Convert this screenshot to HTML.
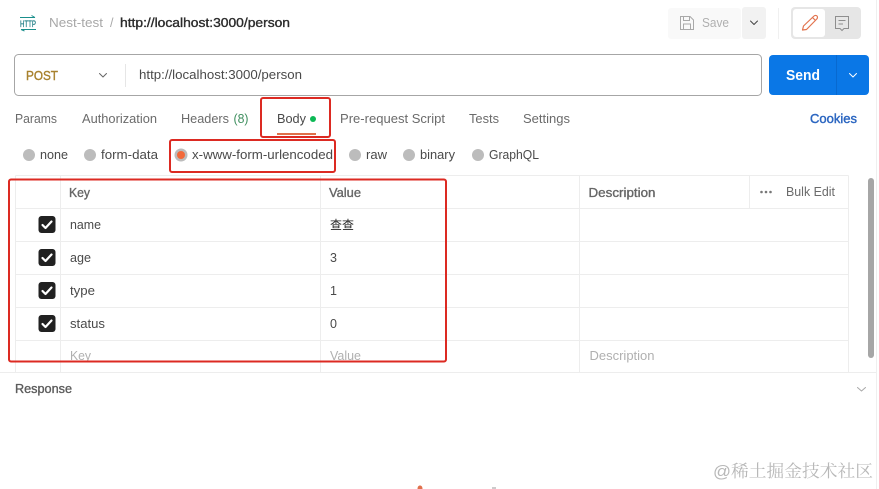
<!DOCTYPE html>
<html><head><meta charset="utf-8"><style>
html,body{margin:0;padding:0;background:#fff;width:879px;height:489px;overflow:hidden}
svg{display:block;filter:blur(.25px)}
text{font-family:"Liberation Sans","Noto Sans CJK SC",sans-serif;font-size:12.5px;fill:#6b6b6b}
.d{fill:#4a4a4a}
.s{fill:#666;stroke:#666;stroke-width:.35px;font-size:12.5px}
.p{fill:#b0b0b0}
.l{stroke:#ededed;stroke-width:1;fill:none}
.r{fill:none;stroke:#dc2a22;stroke-width:2}
.c{fill:none;stroke-width:1;stroke-linecap:round;stroke-linejoin:round}
</style></head><body>
<svg width="879" height="489" viewBox="0 0 879 489" xmlns="http://www.w3.org/2000/svg">
<rect width="879" height="489" fill="#fff"/>
<path d="M876.500 0V489" stroke="#efefef"/>

<!-- http icon -->
<g fill="none" stroke="#1a8f8c" stroke-width="1">
<path d="M20 17.500H35M31.500 15.500L35 17.500"/><path d="M21 29.500H36M21 29.500L24.500 31"/>
</g>
<text x="20" y="27" textLength="16" lengthAdjust="spacingAndGlyphs" style="font-size:9px;fill:#1d7d85;stroke:#1d7d85;stroke-width:.25px">HTTP</text>
<text x="49" y="27" textLength="54" lengthAdjust="spacingAndGlyphs" style="fill:#a8a8a8">Nest-test</text>
<text x="110" y="27" style="fill:#a8a8a8">/</text>
<text x="120" y="27" textLength="170" lengthAdjust="spacingAndGlyphs" style="fill:#2b2b2b;stroke:#2b2b2b;stroke-width:.35px;font-size:12.5px">http://localhost:3000/person</text>

<!-- save -->
<rect x="668" y="8" width="73" height="31" rx="3" fill="#f9f9f9"/>
<path d="M680.500 16.500H690L693.500 20V29.500H680.500Z M683.500 16.500V20.500H689.500V16.500 M683.500 29.500V24H690.500V29.500" fill="none" stroke="#a9a9a9" stroke-width="1"/>
<text x="702" y="27" textLength="27" lengthAdjust="spacingAndGlyphs" class="p" style="font-size:13px">Save</text>
<rect x="742" y="7" width="24" height="32" rx="3" fill="#f2f2f2"/>
<path class="c" stroke="#444" d="M750.500 21L754 24.500L757.500 21"/>
<path d="M778.500 8V39" stroke="#f0f0f0"/>
<rect x="791" y="7" width="70" height="32" rx="4" fill="#e6e6e6"/>
<rect x="793" y="9" width="32" height="28" rx="3" fill="#fff"/>
<path d="M803.500 26L814 16C815 15 816.500 15.500 817 16C817.500 16.500 817.800 18 816.800 19L806.500 29.500L802.500 30Z M812.500 17.500L815.500 20.500" fill="none" stroke="#e2734e" stroke-width="1.200" stroke-linejoin="round"/>
<path d="M835.500 16.500H848.500V28.500H844L842 30.500L840 28.500H835.500Z M838.500 20.500H845.500M838.500 24H843" fill="none" stroke="#8e8e8e" stroke-width="1"/>

<!-- url bar -->
<rect x="14.500" y="54.500" width="747" height="41" rx="4" fill="#fff" stroke="#a6a6a6"/>
<text x="26" y="80" textLength="32" lengthAdjust="spacingAndGlyphs" style="fill:#a8822e;stroke:#a8822e;stroke-width:.4px;font-size:13px">POST</text>
<path class="c" stroke="#666" d="M99.500 73.500L103 77L106.500 73.500"/>
<path d="M125.500 64V87" stroke="#e6e6e6"/>
<text x="139" y="79" textLength="163" lengthAdjust="spacingAndGlyphs" class="d">http://localhost:3000/person</text>
<rect x="769" y="55" width="100" height="40" rx="4" fill="#0a77e6"/>
<path d="M836.500 55V95" stroke="#0869d0"/>
<text x="786" y="80" textLength="34" lengthAdjust="spacingAndGlyphs" style="font-weight:bold;fill:#fff;font-size:14.500px">Send</text>
<path class="c" stroke="#fff" d="M849.500 73.500L853 77L856.500 73.500"/>

<!-- tabs -->
<text x="15" y="123" textLength="42" lengthAdjust="spacingAndGlyphs">Params</text>
<text x="82" y="123" textLength="75" lengthAdjust="spacingAndGlyphs">Authorization</text>
<text x="181" y="123" textLength="48" lengthAdjust="spacingAndGlyphs">Headers</text>
<text x="233.500" y="123" textLength="15" lengthAdjust="spacingAndGlyphs" style="fill:#3f8f5f">(8)</text>
<text x="277" y="123" textLength="29" lengthAdjust="spacingAndGlyphs" class="d">Body</text>
<circle cx="313" cy="119" r="3" fill="#0cb855"/>
<rect x="277" y="133" width="39" height="2" fill="#e0704a"/>
<text x="340" y="123" textLength="105" lengthAdjust="spacingAndGlyphs">Pre-request Script</text>
<text x="469" y="123" textLength="30" lengthAdjust="spacingAndGlyphs">Tests</text>
<text x="523" y="123" textLength="47" lengthAdjust="spacingAndGlyphs">Settings</text>
<text x="810" y="123" textLength="47" lengthAdjust="spacingAndGlyphs" style="fill:#2a65c0;stroke:#2a65c0;stroke-width:.4px;font-size:12.500px">Cookies</text>

<!-- radios -->
<g fill="#bcbcbc">
<circle cx="29" cy="155" r="6"/><circle cx="90" cy="155" r="6"/><circle cx="181" cy="155" r="6.500"/>
<circle cx="355" cy="155" r="6"/><circle cx="409" cy="155" r="6"/><circle cx="478" cy="155" r="6"/>
</g>
<circle cx="181" cy="155" r="4" fill="#f2693a"/>
<text x="40" y="159" textLength="28" lengthAdjust="spacingAndGlyphs" class="d">none</text>
<text x="101" y="159" textLength="57" lengthAdjust="spacingAndGlyphs" class="d">form-data</text>
<text x="192" y="159" textLength="141" lengthAdjust="spacingAndGlyphs" class="d">x-www-form-urlencoded</text>
<text x="366" y="159" textLength="21" lengthAdjust="spacingAndGlyphs" class="d">raw</text>
<text x="420" y="159" textLength="35" lengthAdjust="spacingAndGlyphs" class="d">binary</text>
<text x="489" y="159" textLength="50" lengthAdjust="spacingAndGlyphs" class="d">GraphQL</text>

<!-- table -->
<path class="l" d="M15.500 175.500H848.500M15.500 208.500H848.500M15.500 241.500H848.500M15.500 274.500H848.500M15.500 307.500H848.500M15.500 340.500H848.500M0 372.500H876M15.500 175.500V372M60.500 175.500V372M320.500 175.500V372M579.500 175.500V372M749.500 175.500V208M848.500 175.500V372"/>
<text x="69" y="197" textLength="21" lengthAdjust="spacingAndGlyphs" class="s">Key</text>
<text x="329" y="197" textLength="32" lengthAdjust="spacingAndGlyphs" class="s">Value</text>
<text x="588.500" y="197" textLength="67" lengthAdjust="spacingAndGlyphs" class="s">Description</text>
<g fill="#777"><circle cx="761.500" cy="192" r="1.300"/><circle cx="766" cy="192" r="1.300"/><circle cx="770.500" cy="192" r="1.300"/></g>
<text x="786" y="196" textLength="49" lengthAdjust="spacingAndGlyphs">Bulk Edit</text>

<g fill="#212121">
<rect x="38.500" y="216" width="17" height="17" rx="3"/>
<rect x="38.500" y="249" width="17" height="17" rx="3"/>
<rect x="38.500" y="282" width="17" height="17" rx="3"/>
<rect x="38.500" y="315" width="17" height="17" rx="3"/>
</g>
<g fill="none" stroke="#fff" stroke-width="2.200" stroke-linecap="round" stroke-linejoin="round">
<path d="M42.500 225L45.500 228L51.500 221.500"/>
<path d="M42.500 258L45.500 261L51.500 254.500"/>
<path d="M42.500 291L45.500 294L51.500 287.500"/>
<path d="M42.500 324L45.500 327L51.500 320.500"/>
</g>
<text x="70" y="229" textLength="31" lengthAdjust="spacingAndGlyphs" class="d">name</text>
<text x="70" y="262" textLength="21" lengthAdjust="spacingAndGlyphs" class="d">age</text>
<text x="70" y="295" textLength="25" lengthAdjust="spacingAndGlyphs" class="d">type</text>
<text x="70" y="328" textLength="35" lengthAdjust="spacingAndGlyphs" class="d">status</text>
<text x="330" y="229" textLength="24" lengthAdjust="spacingAndGlyphs" style="fill:#222;font-size:12px">查查</text>
<text x="330" y="262" class="d">3</text>
<text x="330" y="295" class="d">1</text>
<text x="330" y="328" class="d">0</text>
<text x="70" y="360" textLength="21" lengthAdjust="spacingAndGlyphs" class="p">Key</text>
<text x="330" y="360" textLength="31" lengthAdjust="spacingAndGlyphs" class="p">Value</text>
<text x="589.500" y="360" textLength="65" lengthAdjust="spacingAndGlyphs" class="p">Description</text>

<!-- scrollbar -->
<rect x="868" y="178" width="6" height="180" rx="3" fill="#a6a6a6"/>

<!-- response -->
<text x="15" y="393" textLength="57" lengthAdjust="spacingAndGlyphs" style="fill:#5c5c5c;stroke:#5c5c5c;stroke-width:.35px;font-size:12.500px">Response</text>
<path class="c" stroke="#a8a8a8" d="M857.500 387.500L861.500 391L865.500 387.500"/>

<!-- annotation boxes -->
<rect class="r" x="261" y="98" width="69" height="39" rx="2"/>
<rect class="r" x="170" y="140" width="165" height="32" rx="2"/>
<rect class="r" x="9" y="179.500" width="437" height="182" rx="2"/>

<!-- bottom fragments + watermark -->
<path d="M417.500 489C417.500 486 419 485.500 420 485.500C421 485.500 422.500 486 422.500 489Z" fill="#e0714c"/>
<path d="M492 488H496" stroke="#999" stroke-width="1"/>
<text x="713" y="477" textLength="160" lengthAdjust="spacingAndGlyphs" style="font-family:'Liberation Sans','Noto Serif CJK SC',serif;font-size:17px;fill:#b8b8b8">@稀土掘金技术社区</text>
</svg>
</body></html>
